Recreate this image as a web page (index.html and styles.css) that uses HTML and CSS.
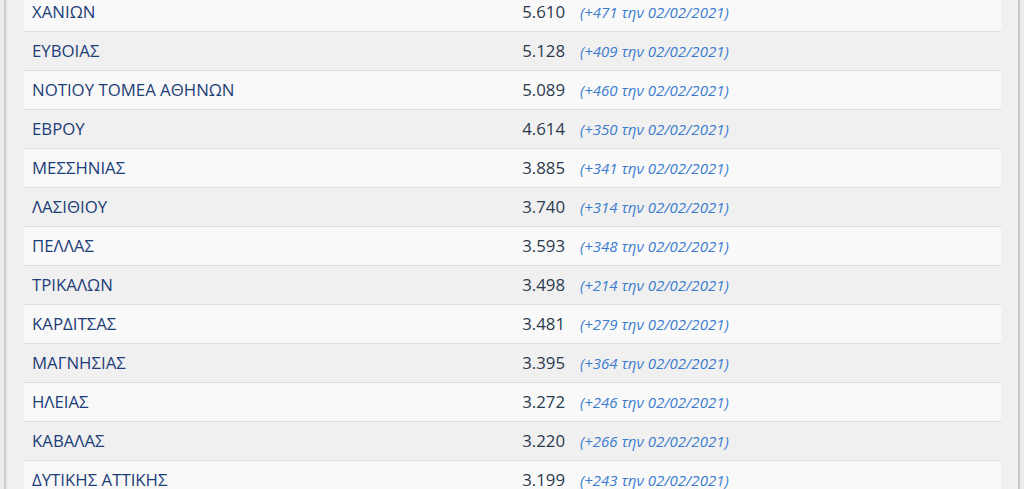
FILE: index.html
```html
<!DOCTYPE html>
<html lang="el">
<head>
<meta charset="utf-8">
<title>Κρούσματα ανά περιφερειακή ενότητα</title>
<link rel="stylesheet" href="styles.css">
</head>
<body>
<div class="panel">
  <table class="stats">
    <colgroup>
      <col class="col-name">
      <col class="col-num">
      <col class="col-delta">
    </colgroup>
    <tbody>
      <tr><td class="name">ΧΑΝΙΩΝ</td><td class="num">5.610</td><td class="delta">(+471 την 02/02/2021)</td></tr>
      <tr><td class="name">ΕΥΒΟΙΑΣ</td><td class="num">5.128</td><td class="delta">(+409 την 02/02/2021)</td></tr>
      <tr><td class="name">ΝΟΤΙΟΥ ΤΟΜΕΑ ΑΘΗΝΩΝ</td><td class="num">5.089</td><td class="delta">(+460 την 02/02/2021)</td></tr>
      <tr><td class="name">ΕΒΡΟΥ</td><td class="num">4.614</td><td class="delta">(+350 την 02/02/2021)</td></tr>
      <tr><td class="name">ΜΕΣΣΗΝΙΑΣ</td><td class="num">3.885</td><td class="delta">(+341 την 02/02/2021)</td></tr>
      <tr><td class="name">ΛΑΣΙΘΙΟΥ</td><td class="num">3.740</td><td class="delta">(+314 την 02/02/2021)</td></tr>
      <tr><td class="name">ΠΕΛΛΑΣ</td><td class="num">3.593</td><td class="delta">(+348 την 02/02/2021)</td></tr>
      <tr><td class="name">ΤΡΙΚΑΛΩΝ</td><td class="num">3.498</td><td class="delta">(+214 την 02/02/2021)</td></tr>
      <tr><td class="name">ΚΑΡΔΙΤΣΑΣ</td><td class="num">3.481</td><td class="delta">(+279 την 02/02/2021)</td></tr>
      <tr><td class="name">ΜΑΓΝΗΣΙΑΣ</td><td class="num">3.395</td><td class="delta">(+364 την 02/02/2021)</td></tr>
      <tr><td class="name">ΗΛΕΙΑΣ</td><td class="num">3.272</td><td class="delta">(+246 την 02/02/2021)</td></tr>
      <tr><td class="name">ΚΑΒΑΛΑΣ</td><td class="num">3.220</td><td class="delta">(+266 την 02/02/2021)</td></tr>
      <tr><td class="name">ΔΥΤΙΚΗΣ ΑΤΤΙΚΗΣ</td><td class="num">3.199</td><td class="delta">(+243 την 02/02/2021)</td></tr>
    </tbody>
  </table>
</div>
</body>
</html>
```

FILE: styles.css
```css
html, body {
  margin: 0;
  padding: 0;
  background: #ebebeb;
  font-family: "Open Sans", "Noto Sans", sans-serif;
  overflow: hidden;
}

.panel {
  margin: 0 4px;
  background: #f0f0f0;
  border-left: 2px solid #d0d0d0;
  border-right: 2px solid #c8c8c8;
  box-shadow: inset 1px 0 0 #e4e4e4;
  padding: 0 17px 40px 18px;
  height: 600px;
  box-sizing: border-box;
}

.stats {
  width: 100%;
  border-collapse: collapse;
  table-layout: fixed;
  margin-top: -8px;
}

.col-name {
  width: 480px;
}

.col-num {
  width: 69px;
}

.stats td {
  border-top: 1px solid #dedede;
  padding: 8px;
  font-size: 16.8px;
  line-height: 22px;
  vertical-align: baseline;
  white-space: nowrap;
}

.stats tr:nth-child(odd) td {
  background: #f9f9f9;
}

.name {
  color: #1d3d78;
}

.num {
  color: #2b3a4e;
  text-align: right;
}

.stats .delta {
  color: #3b7ccf;
  font-style: italic;
  font-size: 15px;
  padding-left: 7px;
}
```
